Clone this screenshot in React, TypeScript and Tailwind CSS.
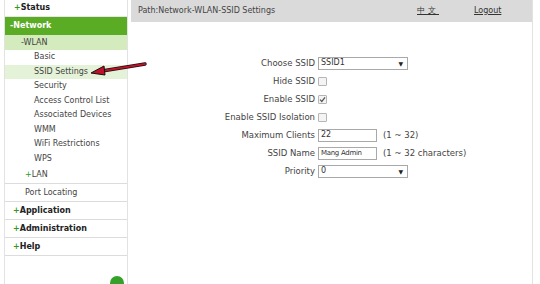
import React from 'react';

const font = { fontFamily: '"DejaVu Sans", Verdana, sans-serif' };

function Plus() {
  return <span className="text-[#2e9a1a] font-bold">+</span>;
}

const subItems = [
  'Basic',
  'SSID Settings',
  'Security',
  'Access Control List',
  'Associated Devices',
  'WMM',
  'WiFi Restrictions',
  'WPS',
];

function Sidebar() {
  return (
    <div className="w-[124px] ml-[4px] shrink-0 border-x border-[#e2e2e2] bg-white text-[8px] text-[#333] flex flex-col">
      <div className="h-[17px] flex items-center pl-[9px] font-bold text-[#222] border-b border-[#e6e6e6]">
        <Plus />Status
      </div>
      <div className="h-[18px] flex items-center pl-[5px] font-bold text-white bg-[#5aac24]">-Network</div>
      <div className="h-[15px] flex items-center pl-[16px] bg-[#d3ebbd] text-[#444]">-WLAN</div>
      {subItems.map((s) => (
        <div
          key={s}
          className={
            'h-[14.5px] flex items-center pl-[29px] text-[#444] ' +
            (s === 'SSID Settings' ? 'bg-[#e4f3d8]' : '')
          }
        >
          {s}
        </div>
      ))}
      <div className="h-[18px] flex items-center pl-[20px] text-[#444] border-b border-[#dcdcdc]">
        <span className="text-[#2e9a1a]">+</span>LAN
      </div>
      <div className="h-[18px] flex items-center pl-[20px] text-[#444] border-b border-[#dcdcdc]">Port Locating</div>
      {['Application', 'Administration', 'Help'].map((s) => (
        <div key={s} className="h-[18px] flex items-center pl-[8px] font-bold text-[#222] border-b border-[#dcdcdc]">
          <Plus />{s}
        </div>
      ))}
      <div className="flex-1" />
    </div>
  );
}

function Select({ value }: { value: string }) {
  return (
    <div className="w-[90px] h-[13px] border border-[#a9a9a9] bg-white flex items-center justify-between px-[2px] text-[8px] text-[#333]">
      <span>{value}</span>
      <span className="text-[6px] text-[#222] mr-[2px]">▼</span>
    </div>
  );
}

function Check({ checked }: { checked?: boolean }) {
  return (
    <div className="w-[9px] h-[9px] border border-[#b5b5b5] bg-[#f4f4f4] rounded-[1px] flex items-center justify-center">
      {checked && (
        <svg viewBox="0 0 10 10" className="w-[7px] h-[7px]">
          <path d="M1.5 5.2 L4 7.8 L8.6 2" fill="none" stroke="#555" strokeWidth="1.8" />
        </svg>
      )}
    </div>
  );
}

function TextBox({ value, small }: { value: string; small?: boolean }) {
  return (
    <div className={'w-[59px] h-[13px] border border-[#a9a9a9] bg-white flex items-center px-[2px] text-[#333] ' + (small ? 'text-[7px] tracking-[-0.3px]' : 'text-[8px]')}>
      {value}
    </div>
  );
}

function Row({ label, children }: { label: string; children: React.ReactNode }) {
  return (
    <>
      <div className="h-[18px] flex items-center justify-end text-[#444]">{label}</div>
      <div className="h-[18px] flex items-center gap-[6px] text-[#444]">{children}</div>
    </>
  );
}

export default function App() {
  return (
    <div className="relative w-[540px] h-[284px] bg-white overflow-hidden flex" style={font}>
      <Sidebar />
      <div className="ml-[3px] w-[402px] border-r border-[#e2e2e2] flex flex-col text-[8.5px]">
        <div className="h-[22px] bg-[#dadada] flex items-center pl-[7px] text-[#444] text-[8px]">
          <span className="w-[279px] shrink-0">Path:Network-WLAN-SSID Settings</span>
          <span className="underline text-[#333] tracking-[3px]">中文</span>
          <span className="underline text-[#333] ml-[35px]">Logout</span>
        </div>
        <div className="grid grid-cols-[184px_auto] gap-x-[3px] pt-[32px]">
          <Row label="Choose SSID"><Select value="SSID1" /></Row>
          <Row label="Hide SSID"><Check /></Row>
          <Row label="Enable SSID"><Check checked /></Row>
          <Row label="Enable SSID Isolation"><Check /></Row>
          <Row label="Maximum Clients"><TextBox value="22" /><span>(1 ~ 32)</span></Row>
          <Row label="SSID Name"><TextBox value="Mang Admin" small /><span>(1 ~ 32 characters)</span></Row>
          <Row label="Priority"><Select value="0" /></Row>
        </div>
      </div>

      {/* red arrow annotation */}
      <svg className="absolute left-[88px] top-[60px] w-[62px] h-[18px]" viewBox="0 0 62 18">
        <path d="M57 4 L14 11" stroke="#111" strokeWidth="3.4" strokeLinecap="round" />
        <path d="M57 4 L14 11" stroke="#c0102a" strokeWidth="1.8" strokeLinecap="round" />
        <path d="M3 13 L16 6 L17 15 Z" fill="#c0102a" stroke="#111" strokeWidth="1" strokeLinejoin="round" />
      </svg>

      {/* help bubble */}
      <div className="absolute left-[110px] top-[276px] w-[14px] h-[14px] rounded-full bg-[#35a12a]" />
    </div>
  );
}
